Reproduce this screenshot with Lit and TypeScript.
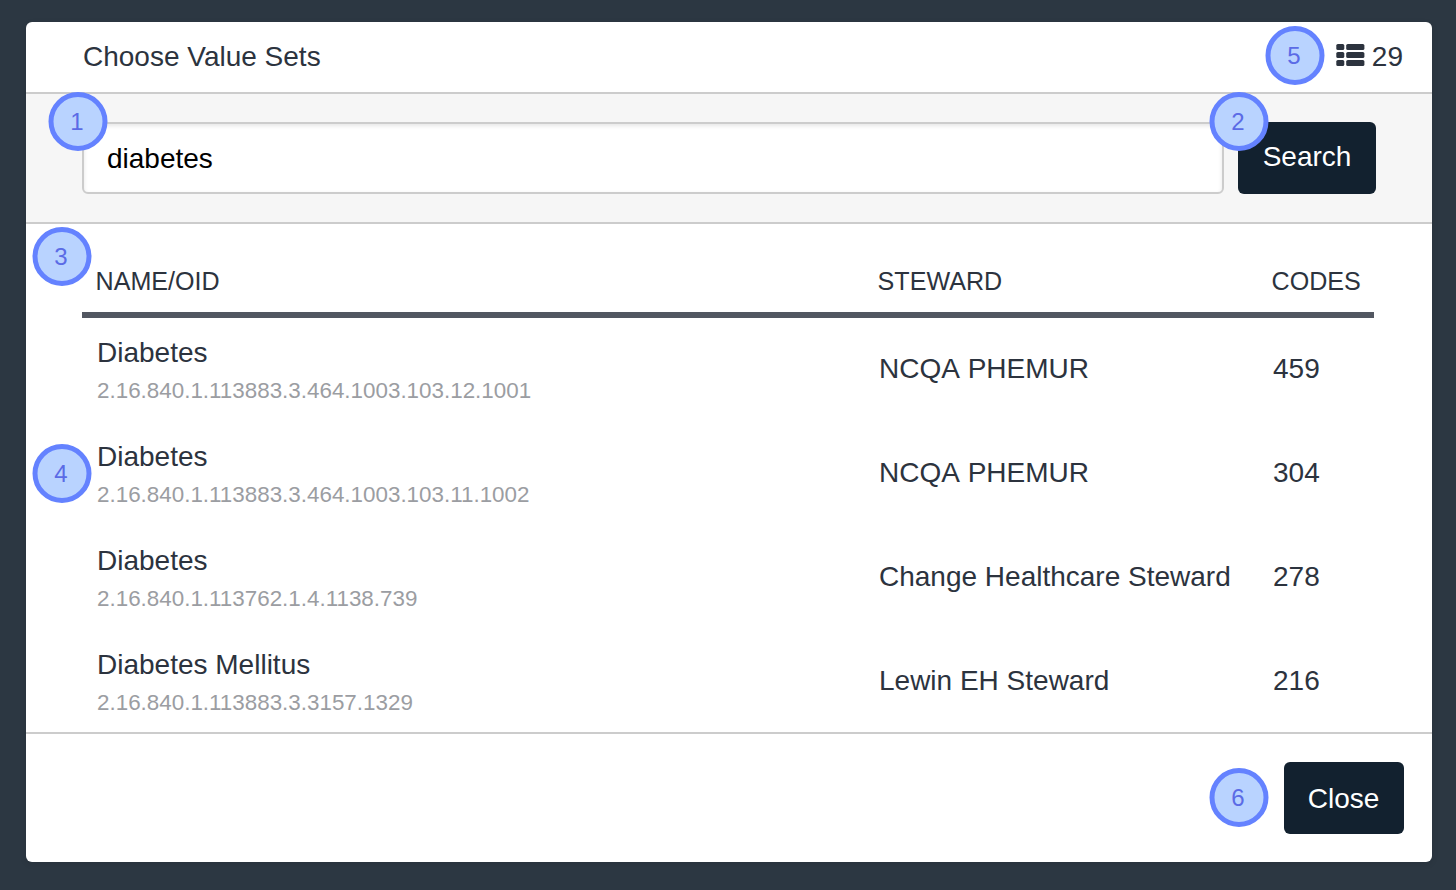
import { LitElement, html, css } from "lit";
import { customElement, property } from "lit/decorators.js";

interface ValueSet {
  name: string;
  oid: string;
  steward: string;
  codes: number;
}

const VALUE_SETS: ValueSet[] = [
  { name: "Diabetes", oid: "2.16.840.1.113883.3.464.1003.103.12.1001", steward: "NCQA PHEMUR", codes: 459 },
  { name: "Diabetes", oid: "2.16.840.1.113883.3.464.1003.103.11.1002", steward: "NCQA PHEMUR", codes: 304 },
  { name: "Diabetes", oid: "2.16.840.1.113762.1.4.1138.739", steward: "Change Healthcare Steward", codes: 278 },
  { name: "Diabetes Mellitus", oid: "2.16.840.1.113883.3.3157.1329", steward: "Lewin EH Steward", codes: 216 },
];

// Callout markers that float over the dialog.
const CALLOUTS = [
  { n: 1, x: 48, y: 92 },
  { n: 2, x: 1209, y: 92 },
  { n: 3, x: 32, y: 227 },
  { n: 4, x: 32, y: 444 },
  { n: 5, x: 1265, y: 26 },
  { n: 6, x: 1209, y: 768 },
];

@customElement("callout-badge")
export class CalloutBadge extends LitElement {
  @property({ type: Number }) number = 0;

  static styles = css`
    :host {
      position: absolute;
      display: flex;
      align-items: center;
      justify-content: center;
      box-sizing: border-box;
      width: 59px;
      height: 59px;
      border: 5px solid #6482ff;
      border-radius: 50%;
      background: #b9d3ff;
      color: #5b6be6;
      font-size: 24px;
      line-height: 28px;
      transform: translateX(0.5px);
    }
    .digit {
      padding-right: 2px;
    }
  `;

  render() {
    return html`<span class="digit">${this.number}</span>`;
  }
}

@customElement("app-root")
export class AppRoot extends LitElement {
  static styles = css`
    :host {
      display: block;
      position: relative;
      box-sizing: border-box;
      height: 890px;
      padding: 22px 24px 28px 26px;
      background: #2c3742;
      color: #2c333e;
      font-family: "Liberation Sans", Arial, Helvetica, sans-serif;
      font-size: 28px;
      overflow: hidden;
    }
    .dialog {
      display: flex;
      flex-direction: column;
      height: 840px;
      border-radius: 6px;
      background: #fff;
      box-shadow: 0 2px 6px rgba(0, 0, 0, 0.1);
      overflow: hidden;
    }
    .header {
      display: flex;
      align-items: center;
      justify-content: space-between;
      box-sizing: border-box;
      height: 72px;
      padding: 0 29px 0 57px;
      border-bottom: 2px solid #ccc;
      line-height: 32px;
    }
    .count {
      display: flex;
      align-items: center;
      gap: 7px;
    }
    .icon {
      display: block;
      width: 29px;
      height: 22px;
      margin-top: -4px;
      fill: #2c333e;
    }
    .search {
      display: flex;
      gap: 14px;
      box-sizing: border-box;
      height: 130px;
      padding: 28px 56px;
      border-bottom: 2px solid #ccc;
      background: #f6f6f6;
    }
    .field {
      flex: 1;
      min-width: 0;
      box-sizing: border-box;
      height: 72px;
      margin: 0;
      padding: 2px 23px 0;
      border: 2px solid #ccc;
      border-radius: 6px;
      background: #fff;
      box-shadow: inset 0 2px 4px rgba(0, 0, 0, 0.1);
      color: #000;
      font: inherit;
      outline: none;
    }
    .button {
      box-sizing: border-box;
      height: 72px;
      margin: 0;
      padding: 0 0 2px;
      border: 0;
      border-radius: 6px;
      background: #12212f;
      color: #fff;
      font: inherit;
      line-height: 32px;
    }
    .go {
      width: 138px;
    }
    .close {
      width: 120px;
      padding: 2px 1px 0 0;
    }
    .results {
      flex: 1;
      min-height: 0;
      padding: 0 58px 0 56px;
      overflow: hidden;
    }
    .row {
      display: grid;
      grid-template-columns: 782px 394px 1fr;
      align-items: center;
      box-sizing: border-box;
      height: 104px;
      padding-left: 15px;
      line-height: 32px;
    }
    .head {
      height: 94px;
      padding: 25px 0 0 13.6px;
      border-bottom: 6px solid #525761;
      font-size: 25.1px;
      text-transform: uppercase;
    }
    .item {
      display: flex;
      flex-direction: column;
      gap: 9px;
      padding-top: 1px;
    }
    .oid {
      color: #9b9da2;
      font-size: 22.4px;
      line-height: 26px;
    }
    .value {
      padding-bottom: 2px;
      font-kerning: none;
    }
    .footer {
      display: flex;
      align-items: center;
      justify-content: flex-end;
      box-sizing: border-box;
      height: 130px;
      padding: 0 28px;
      border-top: 2px solid #ccc;
    }
  `;

  render() {
    return html`
      <div class="dialog">
        <div class="header">
          <span>Choose Value Sets</span>
          <span class="count">
            <svg class="icon" viewBox="0 0 29 22">
              <rect x="0.3" y="0" width="8" height="6" rx="1.6" />
              <rect x="10.2" y="0" width="18.2" height="6" rx="1.6" />
              <rect x="0.3" y="8" width="8" height="6" rx="1.6" />
              <rect x="10.2" y="8" width="18.2" height="6" rx="1.6" />
              <rect x="0.3" y="16" width="8" height="6" rx="1.6" />
              <rect x="10.2" y="16" width="18.2" height="6" rx="1.6" />
            </svg>
            <span>29</span>
          </span>
        </div>
        <div class="search">
          <input class="field" type="text" .value=${"diabetes"} />
          <button class="button go">Search</button>
        </div>
        <div class="results">
          <div class="row head">
            <span>Name/OID</span>
            <span>Steward</span>
            <span>Codes</span>
          </div>
          ${VALUE_SETS.map(
            (v) => html`
              <div class="row">
                <div class="item">
                  <span>${v.name}</span>
                  <span class="oid">${v.oid}</span>
                </div>
                <span class="value">${v.steward}</span>
                <span class="value">${v.codes}</span>
              </div>
            `
          )}
        </div>
        <div class="footer">
          <button class="button close">Close</button>
        </div>
      </div>
      ${CALLOUTS.map(
        (c) => html`<callout-badge .number=${c.n} style="left:${c.x}px;top:${c.y}px"></callout-badge>`
      )}
    `;
  }
}
